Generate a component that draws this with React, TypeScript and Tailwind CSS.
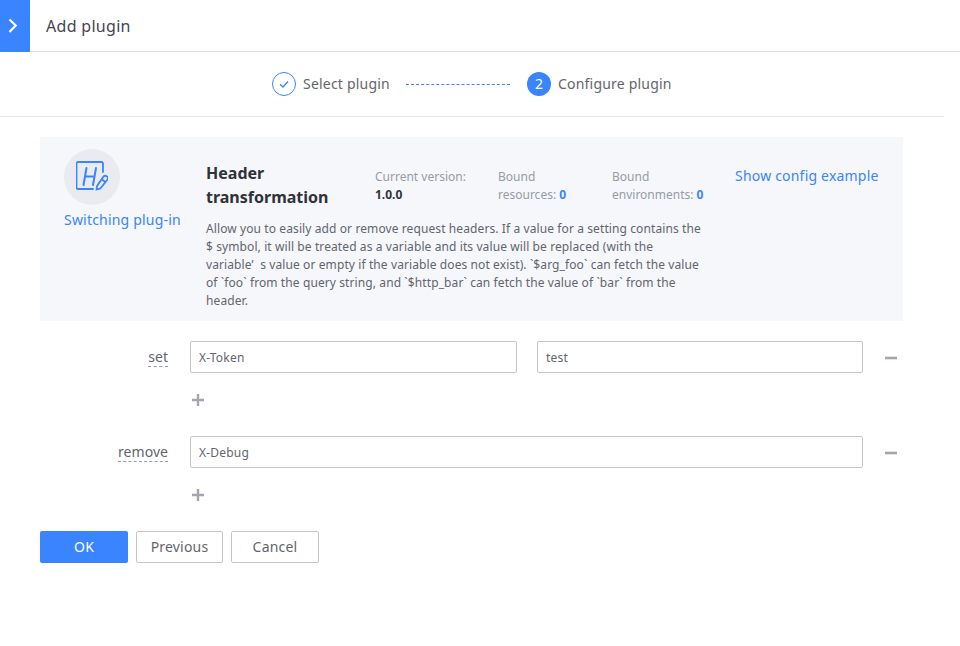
import React from 'react'

const FONT = "font-['Noto_Sans','Noto_Sans_CJK_SC',sans-serif]"

const HeaderIcon: React.FC = () => (
  <svg width="32" height="32" viewBox="0 0 32 32" fill="none" stroke="#3a84ff" strokeWidth="1.8">
    <path d="M27 11V2.5a1.5 1.5 0 0 0-1.5-1.5H2a1.5 1.5 0 0 0-1.5 1.5V26.500a1.500 1.500 0 0 0 1.500 1.500H17" strokeLinecap="round" />
    <path d="M7.500 24 10.500 7M17 24 20 7M9 15.500h9.500" strokeWidth="2" strokeLinecap="round" />
    <path d="M27.500 15.500a2.500 2.500 0 0 1 3.800 3.200l-6.300 8a4 4 0 0 1-2.600 1.500l-1.800.3.200-2.200a4 4 0 0 1 .8-2.200z" />
    <path d="m25.500 18 3.800 3" />
  </svg>
)

const Field: React.FC<{ value: string; className?: string }> = ({ value, className }) => (
  <div className={`h-8 border border-[#c4c6cc] rounded-[2px] pl-2 pr-2 pt-[1px] flex items-center text-xs text-[#63656e] ${className ?? ''}`}>
    {value}
  </div>
)

const MinusIcon: React.FC = () => (
  <svg width="14" height="14" viewBox="0 0 14 14" className="ml-[20px]">
    <rect x="2" y="6.700" width="12" height="2.600" fill="#a3a5b0" />
  </svg>
)

const PlusIcon: React.FC = () => (
  <svg width="15" height="14" viewBox="0 0 15 14" className="ml-[190px] mt-[20px]">
    <path d="M6.800 1h2.400v4.800H14v2.400H9.200V13H6.800V8.200H2V5.800h4.800z" fill="#a3a5b0" />
  </svg>
)

const Label: React.FC<{ text: string }> = ({ text }) => (
  <div className="w-[168px] mr-[22px] flex justify-end text-sm tracking-[0.05px] text-[#63656e]">
    <span className="border-b border-dashed border-[#979ba5] leading-[17px] mt-[1px] pb-[1px]">{text}</span>
  </div>
)

export default function App() {
  return (
    <div className={`w-[960px] h-[646px] bg-white overflow-hidden tracking-[0.2px] ${FONT}`}>
      {/* Title bar */}
      <div className="h-[52px] border-b border-[#dcdee5] flex items-center">
        <div className="w-[30px] h-[52px] -mb-[1px] bg-[#3a84ff] shrink-0">
          <svg width="30" height="52" viewBox="0 0 30 52" fill="none" stroke="white" strokeWidth="2.200">
            <path d="m9.500 19.500 6.200 6-6.200 6.500" />
          </svg>
        </div>
        <h1 className="ml-4 text-base text-[#43454c] leading-6 tracking-[0.3px]">Add plugin</h1>
      </div>

      <div className="w-[944px]">
        {/* Steps */}
        <div className="h-[65px] border-b border-[#e5e6eb] flex items-center pl-[272px] text-sm text-[#63656e]">
          <div className="w-6 h-6 rounded-full border border-[#3a84ff] flex items-center justify-center">
            <svg width="12" height="12" viewBox="0 0 12 12" fill="none" stroke="#3a84ff" strokeWidth="1.300">
              <path d="m2 6.200 3 2.800 5-5.500" />
            </svg>
          </div>
          <span className="ml-[7px] w-[88px]">Select plugin</span>
          <div className="ml-[15px] w-[104px] border-t border-dashed border-[#3a84ff]" />
          <div className="ml-[17px] w-6 h-6 rounded-full bg-[#3a84ff] text-white text-sm flex items-center justify-center">2</div>
          <span className="ml-[7px]">Configure plugin</span>
        </div>

        <div className="px-[40px] pt-[20px]">
          {/* Plugin card */}
          <div className="w-[863px] h-[184px] bg-[#f5f7fb] flex pl-[24px] pt-[12px]">
            <div className="w-[142px] shrink-0">
              <div className="w-14 h-14 rounded-full bg-[#eaebf0] flex items-center justify-center">
                <HeaderIcon />
              </div>
              <div className="mt-[5px] text-sm leading-[20px] text-[#3a84ff] whitespace-nowrap">Switching plug-in</div>
            </div>
            <div className="w-[500px] shrink-0">
              <div className="flex tracking-normal">
                <h2 className="w-[169px] pt-[12px] text-base leading-6 font-bold text-[#313238]">
                  Header
                  <br />
                  transformation
                </h2>
                <div className="w-[123px] pt-[19px] text-xs leading-[18px] text-[#979ba5]">
                  Current version:
                  <div className="font-bold text-[#313238]">1.0.0</div>
                </div>
                <div className="w-[114px] pt-[19px] text-xs leading-[18px] text-[#979ba5]">
                  Bound
                  <br />
                  resources: <span className="font-bold text-[#3a84ff]">0</span>
                </div>
                <div className="w-[94px] pt-[19px] text-xs leading-[18px] text-[#979ba5] whitespace-nowrap">
                  Bound
                  <br />
                  environments: <span className="font-bold text-[#3a84ff]">0</span>
                </div>
              </div>
              <p className="mt-[11px] text-xs leading-[18px] tracking-[0.1px] text-[#63656e]">
                Allow you to easily add or remove request headers. If a value for a setting contains the $ symbol, it
                will be treated as a variable and its value will be replaced (with the variable’&nbsp;&nbsp;s value or
                empty if the variable does not exist). `$arg_foo` can fetch the value of `foo` from the query string, and
                `$http_bar` can fetch the value of `bar` from the header.
              </p>
            </div>
            <div className="ml-[29px] pt-[17px] text-sm leading-[20px] text-[#3a84ff] whitespace-nowrap">Show config example</div>
          </div>
        </div>

        {/* Form */}
        <div className="pt-[20px]">
          <div className="flex items-center">
            <Label text="set" />
            <Field value="X-Token" className="w-[327px]" />
            <Field value="test" className="w-[326px] ml-[20px]" />
            <MinusIcon />
          </div>
          <PlusIcon />

          <div className="flex items-center mt-[29px]">
            <Label text="remove" />
            <Field value="X-Debug" className="w-[673px]" />
            <MinusIcon />
          </div>
          <PlusIcon />
        </div>

        {/* Actions */}
        <div className="flex gap-2 pl-[40px] mt-[29px] text-sm">
          <button className="w-[88px] h-8 rounded-[2px] bg-[#3a84ff] text-white">OK</button>
          <button className="w-[87px] h-8 rounded-[2px] border border-[#c4c6cc] text-[#63656e]">Previous</button>
          <button className="w-[88px] h-8 rounded-[2px] border border-[#c4c6cc] text-[#63656e]">Cancel</button>
        </div>
      </div>
    </div>
  )
}
